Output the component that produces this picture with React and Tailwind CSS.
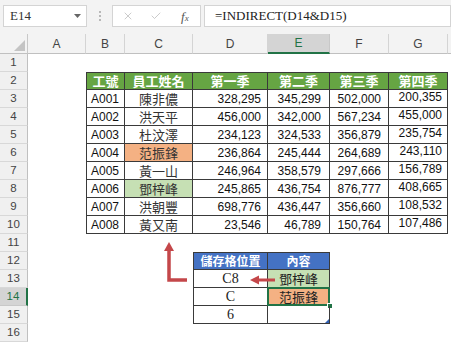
import { X, Check } from "lucide-react";

const W = {
  rh: "w-[28px]",
  A: "w-[58px]",
  B: "w-[39px]",
  C: "w-[68px]",
  D: "w-[75px]",
  E: "w-[62px]",
  F: "w-[59px]",
  G: "w-[59px]",
};

const rows = [
  ["A001", "陳非儂", "328,295", "345,299", "502,000", "200,355"],
  ["A002", "洪天平", "456,000", "342,000", "567,234", "455,000"],
  ["A003", "杜汶澤", "234,123", "324,533", "356,879", "235,754"],
  ["A004", "范振鋒", "236,864", "245,444", "264,689", "243,110"],
  ["A005", "黃一山", "246,964", "358,579", "297,666", "156,789"],
  ["A006", "鄧梓峰", "245,865", "436,754", "876,777", "408,665"],
  ["A007", "洪朝豐", "698,776", "436,447", "356,660", "108,532"],
  ["A008", "黃又南", "23,546", "46,789", "150,764", "107,486"],
];

const nameBg = {
  "范振鋒": "bg-[#f4b183]",
  "鄧梓峰": "bg-[#c6e0b4]",
};

const cjk = "font-['Noto_Sans_CJK_TC',sans-serif]";

function Cell({ w, className = "", children }) {
  return (
    <div className={`${w} shrink-0 h-full flex items-center ${className}`}>
      {children}
    </div>
  );
}

function SheetRow({ n, active, children }) {
  return (
    <div className="flex h-[18px]">
      <div
        className={
          active
            ? "w-[28px] shrink-0 flex items-center justify-center bg-[#d4d4d4] text-[#217346] text-[11.5px] border-b border-b-[#c8c8c8] border-r-2 border-r-[#217346]"
            : "w-[28px] shrink-0 flex items-center justify-center bg-[#f0f0f0] text-[#444] text-[11.5px] border-b border-b-[#d8d8d8] border-r border-r-[#c0c0c0]"
        }
      >
        {n}
      </div>
      {children}
    </div>
  );
}

function Toolbar() {
  return (
    <div className="h-[34px] flex items-start pt-[5px] bg-[#f3f3f3]">
      <div className="ml-[3px] w-[84px] h-[22px] bg-white border border-[#d4d4d4] flex items-center justify-between pl-[6px] pr-[5px] font-['Liberation_Serif',serif] text-[13px] text-[#333]">
        <span>E14</span>
        <svg width="7" height="4" viewBox="0 0 7 4">
          <polygon points="0,0 7,0 3.5,4" fill="#666" />
        </svg>
      </div>
      <div className="w-[25px] h-[22px] flex flex-col items-center justify-center gap-[2px]">
        <span className="w-[2px] h-[2px] bg-[#b8b8b8]" />
        <span className="w-[2px] h-[2px] bg-[#b8b8b8]" />
        <span className="w-[2px] h-[2px] bg-[#b8b8b8]" />
      </div>
      <div className="w-[89px] h-[22px] bg-white border border-[#d4d4d4] flex items-center">
        <X size={12} strokeWidth={1.4} className="ml-[9px] text-[#b5b5b5]" />
        <Check size={12} strokeWidth={1.4} className="ml-[16px] text-[#b5b5b5]" />
        <span className="ml-[19px] italic font-['Liberation_Serif',serif] text-[13px] text-[#555] leading-none">
          f<span className="text-[9px]">x</span>
        </span>
      </div>
      <div className="ml-[3px] flex-1 h-[22px] bg-white border border-[#d4d4d4] flex items-center pl-[10px] font-['Liberation_Serif',serif] text-[13px] text-[#222]">
        =INDIRECT(D14&amp;D15)
      </div>
    </div>
  );
}

function ColHeader() {
  const cols = ["A", "B", "C", "D", "E", "F", "G"];
  return (
    <div className="flex h-[20px] bg-[#f3f3f3] text-[12px] text-[#444]">
      <div className="w-[28px] shrink-0 relative border-r border-[#c8c8c8] border-b border-b-[#c0c0c0]">
        <svg className="absolute right-[2px] bottom-[2px]" width="11" height="11" viewBox="0 0 11 11">
          <polygon points="11,0 11,11 0,11" fill="#c4c4c4" />
        </svg>
      </div>
      {cols.map((c) =>
        c === "E" ? (
          <div
            key={c}
            className={`${W[c]} shrink-0 flex items-center justify-center bg-[#d4d4d4] text-[#217346] border-b-2 border-[#217346] border-r border-r-[#c8c8c8]`}
          >
            {c}
          </div>
        ) : (
          <div
            key={c}
            className={`${W[c]} shrink-0 flex items-center justify-center border-r border-[#d4d4d4] border-b border-b-[#c0c0c0]`}
          >
            {c}
          </div>
        )
      )}
      <div className="flex-1 border-b border-[#c0c0c0]" />
    </div>
  );
}

const tb = "border-[#3a3a3a] border-r border-b";

export default function App() {
  return (
    <div className="relative w-[451px] h-[342px] overflow-hidden bg-white font-['Liberation_Sans',sans-serif]">
      <Toolbar />
      <ColHeader />

      <SheetRow n={1} />

      <SheetRow n={2}>
        <Cell w={W.A} />
        <Cell w={W.B} className={`${tb} border-l border-t bg-[#66a543] justify-center text-white font-bold text-[13px] ${cjk}`}>工號</Cell>
        <Cell w={W.C} className={`${tb} border-t bg-[#66a543] justify-center text-white font-bold text-[13px] ${cjk}`}>員工姓名</Cell>
        <Cell w={W.D} className={`${tb} border-t bg-[#66a543] justify-center text-white font-bold text-[13px] ${cjk}`}>第一季</Cell>
        <Cell w={W.E} className={`${tb} border-t bg-[#66a543] justify-center text-white font-bold text-[13px] ${cjk}`}>第二季</Cell>
        <Cell w={W.F} className={`${tb} border-t bg-[#66a543] justify-center text-white font-bold text-[13px] ${cjk}`}>第三季</Cell>
        <Cell w={W.G} className={`${tb} border-t bg-[#66a543] justify-center text-white font-bold text-[13px] ${cjk}`}>第四季</Cell>
      </SheetRow>

      {rows.map((r, i) => (
        <SheetRow key={r[0]} n={i + 3}>
          <Cell w={W.A} />
          <Cell w={W.B} className={`${tb} border-l pl-[4px] text-[12px] text-[#111]`}>{r[0]}</Cell>
          <Cell w={W.C} className={`${tb} justify-center text-[13px] text-[#333] ${cjk} ${nameBg[r[1]] || ""}`}>{r[1]}</Cell>
          <Cell w={W.D} className={`${tb} justify-end pr-[6px] text-[12px] text-[#111]`}>{r[2]}</Cell>
          <Cell w={W.E} className={`${tb} justify-end pr-[8px] text-[12px] text-[#111]`}>{r[3]}</Cell>
          <Cell w={W.F} className={`${tb} justify-end pr-[7px] text-[12px] text-[#111]`}>{r[4]}</Cell>
          <Cell w={W.G} className={`${tb} justify-end pr-[5px] pb-[3px] text-[12px] text-[#111]`}>{r[5]}</Cell>
        </SheetRow>
      ))}

      <SheetRow n={11} />

      <SheetRow n={12}>
        <Cell w={W.A} />
        <Cell w={W.B} />
        <Cell w={W.C} />
        <Cell w={W.D} className={`${tb} border-l border-t bg-[#4472c4] justify-center text-white font-bold text-[12px] ${cjk}`}>儲存格位置</Cell>
        <Cell w={W.E} className={`${tb} border-t bg-[#4472c4] justify-center text-white font-bold text-[12px] ${cjk}`}>內容</Cell>
      </SheetRow>

      <SheetRow n={13}>
        <Cell w={W.A} />
        <Cell w={W.B} />
        <Cell w={W.C} />
        <Cell w={W.D} className={`${tb} border-l justify-center font-['Liberation_Serif',serif] text-[14px] text-[#222]`}>C8</Cell>
        <Cell w={W.E} className={`${tb} bg-[#c6e0b4] justify-center text-[13px] text-[#222] ${cjk}`}>鄧梓峰</Cell>
      </SheetRow>

      <SheetRow n={14} active>
        <Cell w={W.A} />
        <Cell w={W.B} />
        <Cell w={W.C} />
        <Cell w={W.D} className={`${tb} border-l justify-center font-['Liberation_Serif',serif] text-[14px] text-[#222]`}>C</Cell>
        <Cell w={W.E} className={`${tb} relative bg-[#f4b183] justify-center text-[13px] text-[#222] ${cjk}`}>
          范振鋒
          <span className="absolute -left-px -top-px -right-px -bottom-px border-2 border-[#217346]" />
          <span className="absolute -right-[4px] -bottom-[4px] w-[6px] h-[6px] bg-[#217346] border border-white" />
        </Cell>
      </SheetRow>

      <SheetRow n={15}>
        <Cell w={W.A} />
        <Cell w={W.B} />
        <Cell w={W.C} />
        <Cell w={W.D} className={`${tb} border-l justify-center font-['Liberation_Serif',serif] text-[14px] text-[#222]`}>6</Cell>
        <Cell w={W.E} className={`${tb} relative`}>
          <svg className="absolute right-0 bottom-0" width="4" height="4" viewBox="0 0 4 4">
            <polygon points="4,0 4,4 0,4" fill="#2f5fb3" />
          </svg>
        </Cell>
      </SheetRow>

      <SheetRow n={16} />

      {/* red arrows drawn over the sheet */}
      <svg className="absolute left-0 top-0 pointer-events-none" width="451" height="342" viewBox="0 0 451 342">
        <polyline points="169,249 169,280 187,280" fill="none" stroke="#c4474a" strokeWidth="3.5" />
        <polygon points="169,242 164,251 174,251" fill="#c4474a" />
        <line x1="257" y1="280" x2="275" y2="280" stroke="#c4474a" strokeWidth="3" />
        <polygon points="250,280 259,275.5 259,284.5" fill="#c4474a" />
      </svg>
    </div>
  );
}
